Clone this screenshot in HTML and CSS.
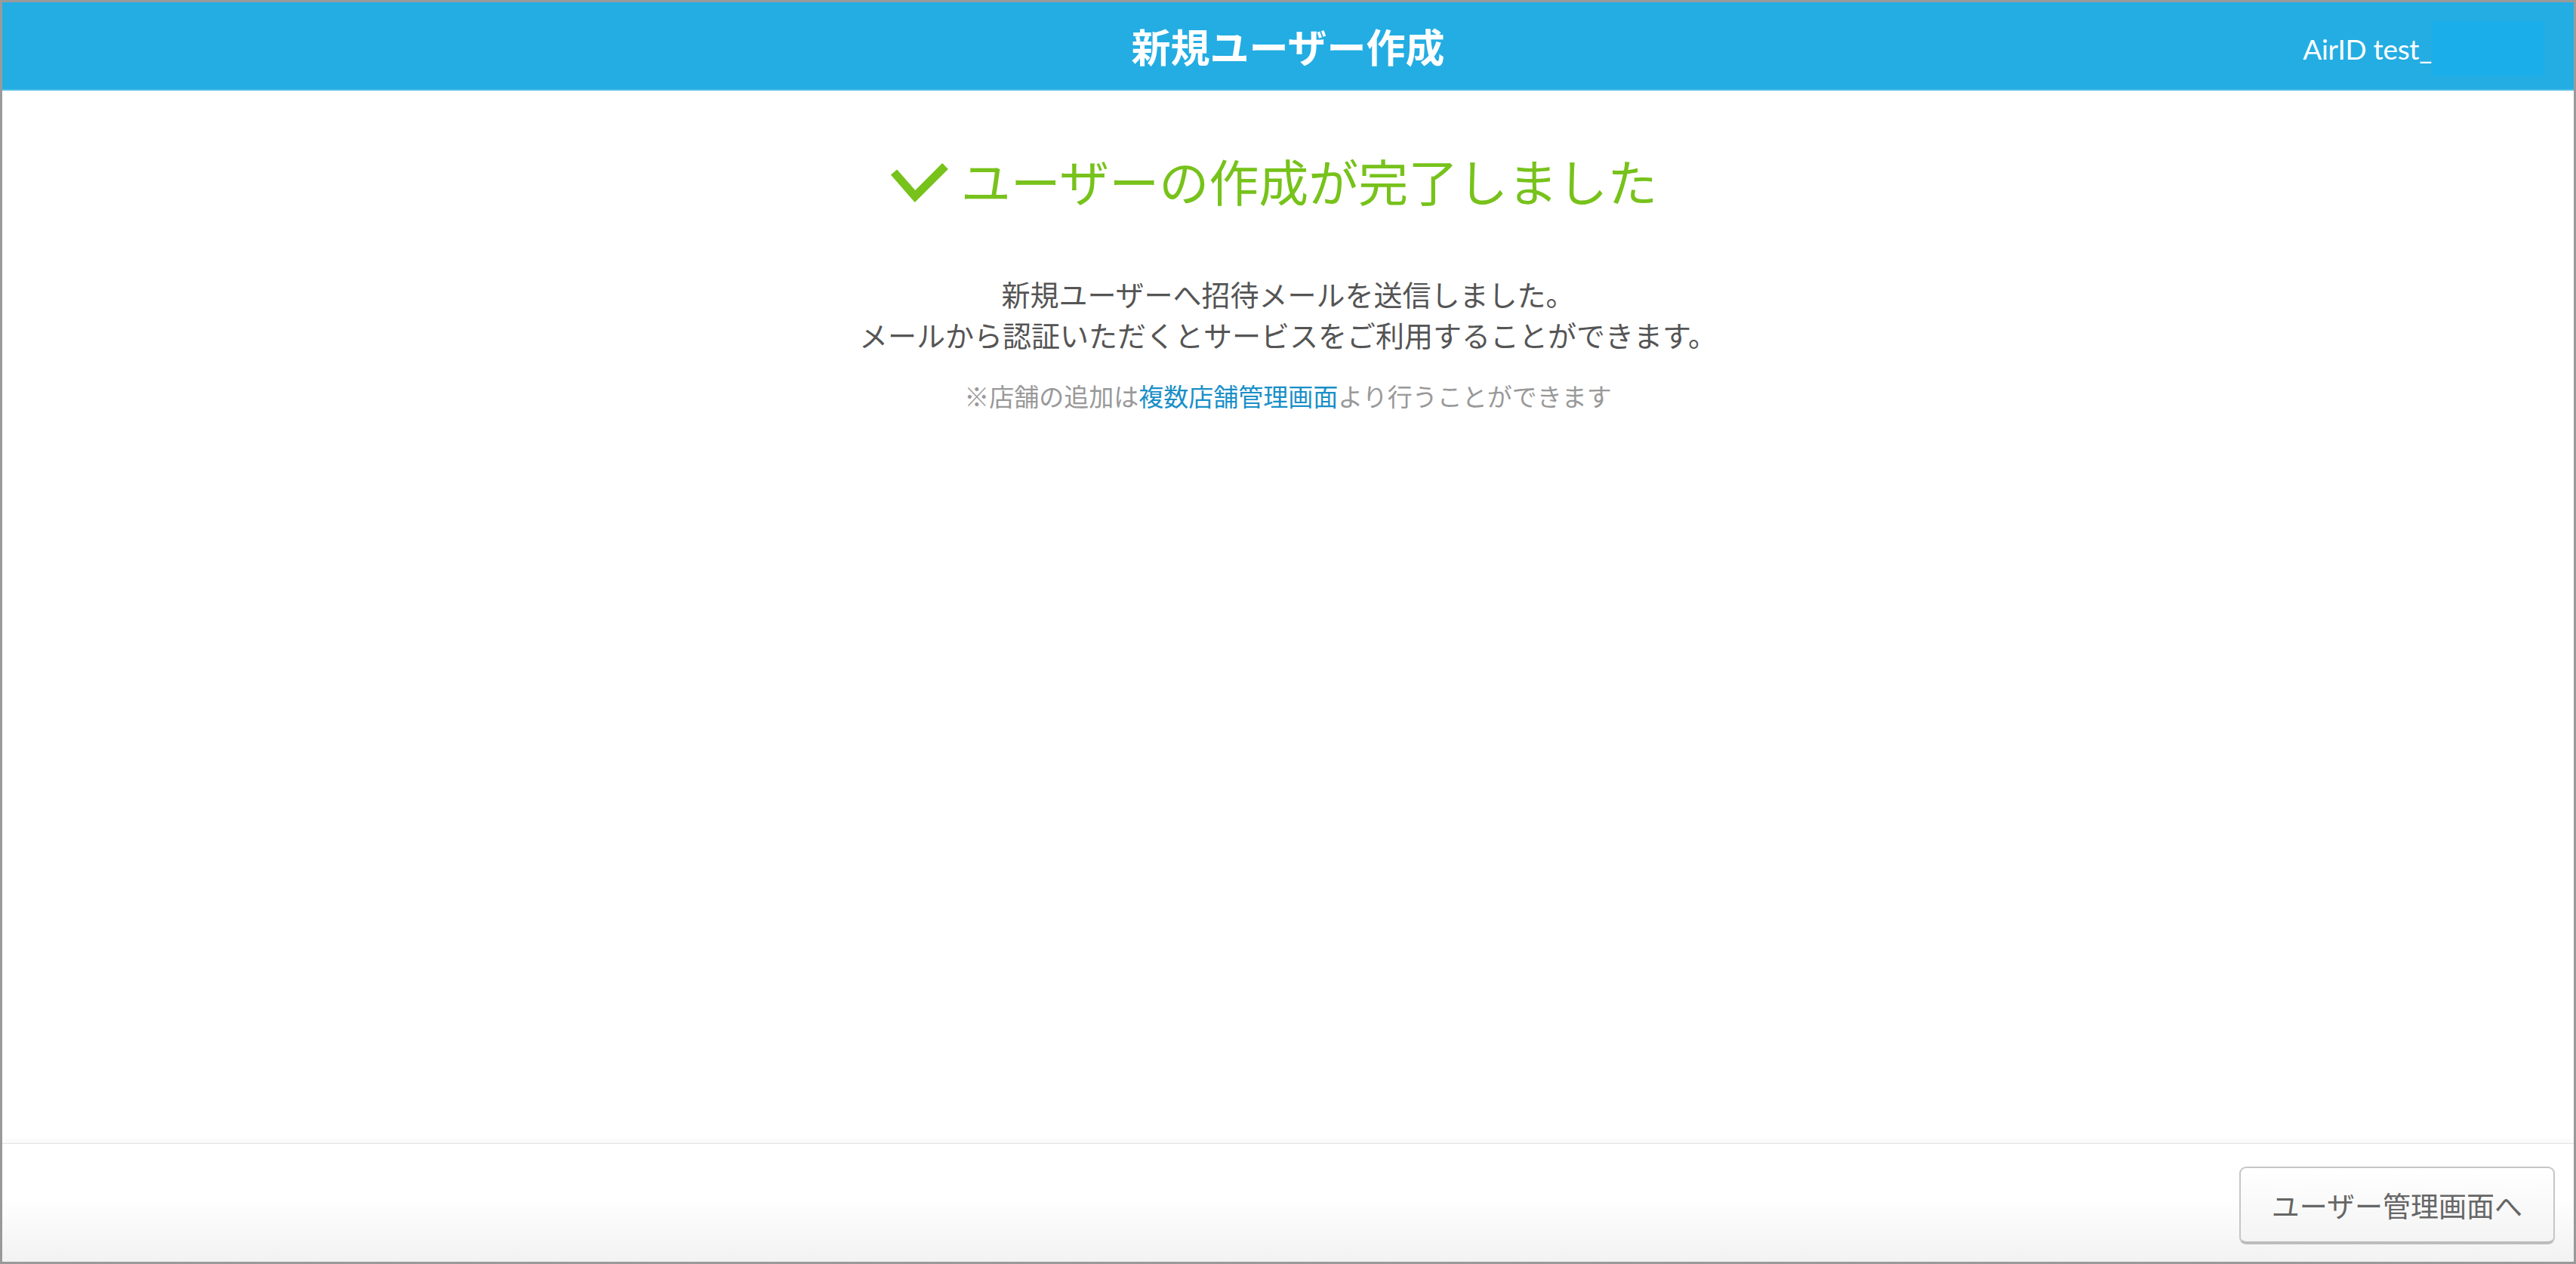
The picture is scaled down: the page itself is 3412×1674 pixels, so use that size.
FILE: index.html
```html
<!DOCTYPE html>
<html lang="ja">
<head>
    <meta charset="UTF-8">
    <meta name="viewport" content="width=device-width, initial-scale=1.0">
    <title>新規ユーザー作成</title>
    <link rel="stylesheet" href="styles.css">
</head>
<body>

    <div class="frame">
        <header class="header">
            <h1 class="header-title">新規ユーザー作成</h1>
            <div class="account">
                <span class="account-name">AirID test_</span>
                <span class="account-mask"></span>
            </div>
        </header>

        <main class="content">
            <h2 class="done-title">
                <svg class="check" width="80" height="56" viewBox="0 0 80 56">
                    <polyline points="5,14 33,46 73,6" fill="none" stroke="#77c21b" stroke-width="11"/>
                </svg>
                <span>ユーザーの作成が完了しました</span>
            </h2>

            <p class="message">
                新規ユーザーへ招待メールを送信しました。<br>
                メールから認証いただくとサービスをご利用することができます。
            </p>

            <p class="note">※店舗の追加は<a href="#" class="note-link">複数店舗管理画面</a>より行うことができます</p>
        </main>

        <footer class="footer">
            <button class="btn" type="button">ユーザー管理画面へ</button>
        </footer>
    </div>

</body>
</html>
```

FILE: styles.css
```css
html, body {
    margin: 0;
    padding: 0;
    height: 100%;
}

body {
    font-family: "Noto Sans CJK JP", "Noto Sans", sans-serif;
    color: #555;
    background-color: #fff;
}

.frame {
    height: 100vh;
    box-sizing: border-box;
    border: 3px solid #9a9a9a;
    display: flex;
    flex-direction: column;
}

.header {
    position: relative;
    height: 115px;
    background-color: #23ade3;
    border-bottom: 2px solid #4cbdea;
    display: flex;
    align-items: center;
    justify-content: center;
}

.header-title {
    margin: 0;
    font-size: 52px;
    font-weight: bold;
    line-height: 1;
    color: #fff;
}

/* ログインユーザー表示 */
.account {
    position: absolute;
    right: 40px;
    top: 25px;
    display: flex;
    align-items: center;
    height: 72px;
}

.account-name {
    font-family: Lato, "Noto Sans", sans-serif;
    font-size: 37px;
    color: #fff;
    letter-spacing: -0.3px;
}

.account-mask {
    display: inline-block;
    width: 148px;
    height: 72px;
    background-color: #1aafeb;
}

.content {
    flex: 1;
    text-align: center;
    padding-top: 78px;
}

.done-title {
    margin: 0;
    display: flex;
    align-items: center;
    justify-content: center;
    gap: 14px;
    font-size: 66px;
    font-weight: normal;
    line-height: 80px;
    color: #77c21b;
    margin-left: -38px;
}

.check {
    display: block;
    margin-top: 8px;
}

.message {
    margin: 84px 0 0;
    font-size: 38px;
    line-height: 54px;
    color: #555;
}

.note {
    margin: 32px 0 0;
    font-size: 33px;
    line-height: 44px;
    color: #999;
}

.note-link {
    color: #1a8fc7;
    text-decoration: none;
}

.footer {
    height: 157px;
    box-sizing: border-box;
    border-top: 1px solid #e4e4e4;
    box-shadow: 0 -4px 6px rgba(0, 0, 0, 0.03);
    background: linear-gradient(#fff 45%, #f2f2f2);
    display: flex;
    justify-content: flex-end;
    align-items: flex-start;
    padding: 30px 25px 0 0;
}

.btn {
    width: 418px;
    height: 103px;
    font-family: "Noto Sans CJK JP", "Noto Sans", sans-serif;
    font-size: 37px;
    color: #666;
    background: linear-gradient(#fff, #f4f4f4);
    border: 2px solid #c6c6c6;
    border-bottom-width: 4px;
    border-bottom-color: #bcbcbc;
    border-radius: 9px;
    cursor: pointer;
}
```
